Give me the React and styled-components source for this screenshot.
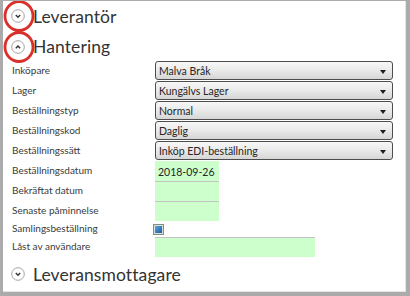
import React from 'react'
import styled, { createGlobalStyle } from 'styled-components'

const GlobalStyle = createGlobalStyle`
  html, body {
    margin: 0;
    padding: 0;
    background: #ffffff;
  }
  body {
    font-family: Lato, "Open Sans", sans-serif;
    color: #333333;
  }
`

const Frame = styled.div`
  width: 410px;
  height: 296px;
  box-sizing: border-box;
  border-style: solid;
  border-color: #ababab;
  border-width: 1px 4px 4px 3px;
  background: #ffffff;
  overflow: hidden;
`

const Inner = styled.div`
  height: 100%;
  box-sizing: border-box;
  border-right: 1px solid #e4e4e4;
  border-bottom: 1px solid #e4e4e4;
  display: flex;
  flex-direction: column;
`

const SectionHeader = styled.div`
  display: flex;
  align-items: center;
  gap: 8px;
  height: ${props => props.height}px;
  padding-left: 8px;
  font-size: 17.5px;
  color: #333333;
  letter-spacing: 0.1px;
`

const IconWrap = styled.div`
  position: relative;
  width: 14px;
  height: 14px;
  flex: none;

  & > svg {
    display: block;
  }
`

const Ring = styled.svg`
  position: absolute;
  left: -8px;
  top: -9px;
  width: 32px;
  height: 32px;
  pointer-events: none;
`

const Fields = styled.div`
  display: grid;
  grid-template-columns: 143px 1fr;
  padding-left: 9px;
`

const Label = styled.div`
  font-size: 10px;
  color: #3a3a3a;
  height: ${props => props.height}px;
  display: flex;
  align-items: center;
  padding-bottom: 3px;
  box-sizing: border-box;
`

const Cell = styled.div`
  height: ${props => props.height}px;
  display: flex;
  align-items: ${props => (props.top ? 'flex-start' : 'center')};
`

const Select = styled.div`
  width: 238px;
  height: 19px;
  box-sizing: border-box;
  border: 1px solid #4d4d4d;
  border-radius: 3px;
  background: linear-gradient(to bottom, #f7f7f7 0%, #ebebeb 45%, #d6d6d6 100%);
  display: flex;
  align-items: center;
  justify-content: space-between;
  padding: 0 6px 0 3px;
  font-size: 10.5px;
  color: #262626;
  margin-bottom: 1px;
`

const Arrow = styled.span`
  width: 0;
  height: 0;
  border-left: 3px solid transparent;
  border-right: 3px solid transparent;
  border-top: 4px solid #1e1e1e;
  margin-top: 2px;
`

const Input = styled.div`
  width: ${props => props.width}px;
  height: 20px;
  box-sizing: border-box;
  background: #ccffcc;
  border-top: 1px solid ${props => (props.plain ? '#ccffcc' : '#c3c3c3')};
  font-size: 10.5px;
  color: #262626;
  padding: 1px 0 0 3px;
  display: flex;
  align-items: center;
`

const Check = styled.div`
  width: 11px;
  height: 11px;
  box-sizing: border-box;
  margin: 3px 0 0 -2px;
  border: 1px solid #7f8f86;
  background: #d7e0da;
  display: flex;
  align-items: center;
  justify-content: center;

  &::after {
    content: '';
    width: 7px;
    height: 7px;
    background: linear-gradient(135deg, #5fa4e0, #1c5c9e);
  }
`

const CircleIcon = ({ up }) => (
  <svg width="14" height="14" viewBox="0 0 14 14">
    <circle cx="7" cy="7" r="6.3" fill="#fff" stroke="#a3a3a3" strokeWidth="1" />
    <path
      d={up ? 'M4.8 8.2 L7 6 L9.2 8.2' : 'M4.8 6 L7 8.2 L9.2 6'}
      fill="none"
      stroke="#333"
      strokeWidth="1.4"
    />
  </svg>
)

const Header = ({ title, up, marked, height }) => (
  <SectionHeader height={height}>
    <IconWrap>
      <CircleIcon up={up} />
      {marked && (
        <Ring viewBox="0 0 32 32">
          <ellipse cx="16" cy="16" rx="14" ry="14.5" fill="none" stroke="#d9302c" strokeWidth="2.8" />
        </Ring>
      )}
    </IconWrap>
    <span>{title}</span>
  </SectionHeader>
)

const selects = [
  ['Inköpare', 'Malva Bråk'],
  ['Lager', 'Kungälvs Lager'],
  ['Beställningstyp', 'Normal'],
  ['Beställningskod', 'Daglig'],
  ['Beställningssätt', 'Inköp EDI-beställning'],
]

const dates = [
  ['Beställningsdatum', '2018-09-26'],
  ['Bekräftat datum', ''],
  ['Senaste påminnelse', ''],
]

const App = () => (
  <>
    <GlobalStyle />
    <Frame>
      <Inner>
        <Header title="Leverantör" marked height={32} />
        <Header title="Hantering" up marked height={31} />
        <Fields>
          {selects.map(([label, value]) => (
            <React.Fragment key={label}>
              <Label height={20}>{label}</Label>
              <Cell height={20} top>
                <Select>
                  <span>{value}</span>
                  <Arrow />
                </Select>
              </Cell>
            </React.Fragment>
          ))}
          {dates.map(([label, value], i) => (
            <React.Fragment key={label}>
              <Label height={20}>{label}</Label>
              <Cell height={20} top>
                <Input width={64} plain={i === 0}>{value}</Input>
              </Cell>
            </React.Fragment>
          ))}
          <Label height={16}>Samlingsbeställning</Label>
          <Cell height={16} top>
            <Check />
          </Cell>
          <Label height={20}>Låst av användare</Label>
          <Cell height={20} top>
            <Input width={160} />
          </Cell>
        </Fields>
        <Header title="Leveransmottagare" height={35} />
      </Inner>
    </Frame>
  </>
)

export default App
